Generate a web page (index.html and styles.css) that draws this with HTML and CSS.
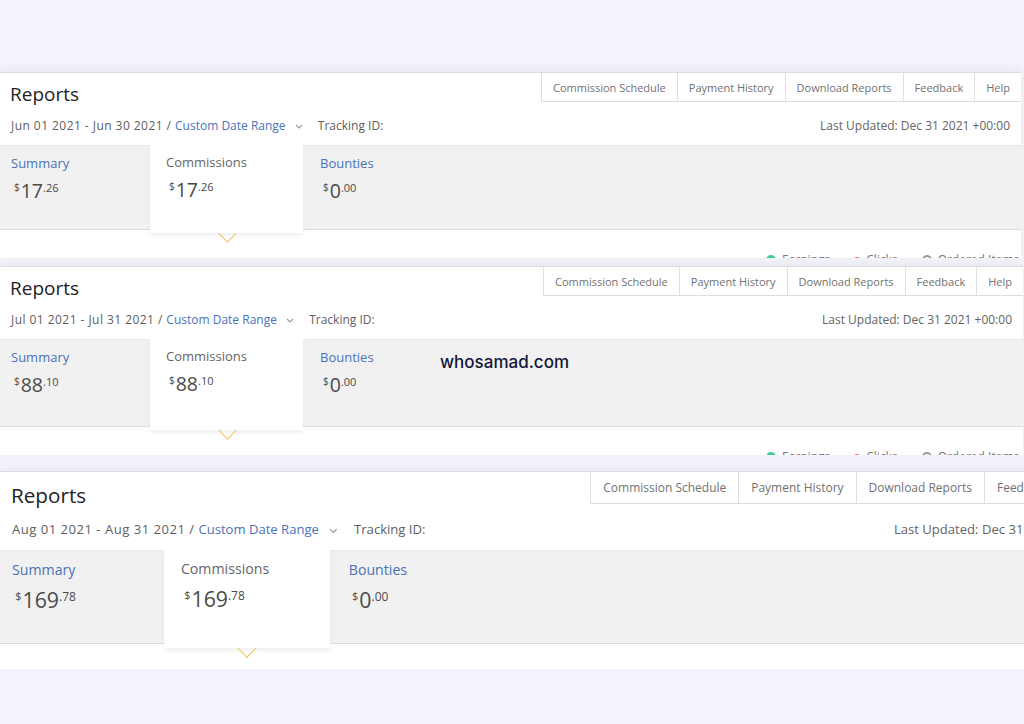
FILE: index.html
```html
<!DOCTYPE html>
<html lang="en">
<head>
    <meta charset="UTF-8">
    <title>Reports - Jun to Aug 2021</title>
    <link rel="stylesheet" href="styles.css">
</head>
<body>
    <main class="collage">

        <!-- June -->
        <section class="panel panel-jun">
            <header class="panel-head">
                <h2 class="title">Reports</h2>
                <nav class="tabs">
                    <a class="tab">Commission Schedule</a>
                    <a class="tab">Payment History</a>
                    <a class="tab">Download Reports</a>
                    <a class="tab">Feedback</a>
                    <a class="tab">Help</a>
                </nav>
            </header>
            <div class="range-row">
                <div class="range">
                    <span class="dates">Jun 01 2021 - Jun 30 2021 / </span><a class="link">Custom Date Range</a>
                    <svg class="caret" width="8" height="5" viewBox="0 0 8 5"><polyline points="1,1 4,4 7,1" fill="none" stroke="#9a9a9a" stroke-width="1.2"/></svg>
                    <span class="tracking">Tracking ID:</span>
                </div>
                <div class="updated">Last Updated: Dec 31 2021 +00:00</div>
            </div>
            <div class="band">
                <div class="tile tile-first">
                    <a class="tile-label">Summary</a>
                    <div class="amount"><span class="cur">$</span>17<span class="cents">.26</span></div>
                </div>
                <div class="tile tile-active">
                    <span class="tile-label">Commissions</span>
                    <div class="amount"><span class="cur">$</span>17<span class="cents">.26</span></div>
                </div>
                <div class="tile">
                    <a class="tile-label">Bounties</a>
                    <div class="amount"><span class="cur">$</span>0<span class="cents">.00</span></div>
                </div>
            </div>
            <div class="legend">
                <span class="key"><i class="dot dot-green"></i>Earnings</span>
                <span class="key"><i class="dot dot-pink"></i>Clicks</span>
                <span class="key"><i class="dot dot-grey"></i>Ordered Items</span>
            </div>
        </section>

        <!-- July -->
        <section class="panel panel-jul">
            <header class="panel-head">
                <h2 class="title">Reports</h2>
                <nav class="tabs">
                    <a class="tab">Commission Schedule</a>
                    <a class="tab">Payment History</a>
                    <a class="tab">Download Reports</a>
                    <a class="tab">Feedback</a>
                    <a class="tab">Help</a>
                </nav>
            </header>
            <div class="range-row">
                <div class="range">
                    <span class="dates">Jul 01 2021 - Jul 31 2021 / </span><a class="link">Custom Date Range</a>
                    <svg class="caret" width="8" height="5" viewBox="0 0 8 5"><polyline points="1,1 4,4 7,1" fill="none" stroke="#9a9a9a" stroke-width="1.2"/></svg>
                    <span class="tracking">Tracking ID:</span>
                </div>
                <div class="updated">Last Updated: Dec 31 2021 +00:00</div>
            </div>
            <div class="band">
                <div class="tile tile-first">
                    <a class="tile-label">Summary</a>
                    <div class="amount"><span class="cur">$</span>88<span class="cents">.10</span></div>
                </div>
                <div class="tile tile-active">
                    <span class="tile-label">Commissions</span>
                    <div class="amount"><span class="cur">$</span>88<span class="cents">.10</span></div>
                </div>
                <div class="tile">
                    <a class="tile-label">Bounties</a>
                    <div class="amount"><span class="cur">$</span>0<span class="cents">.00</span></div>
                </div>
            </div>
            <div class="legend">
                <span class="key"><i class="dot dot-green"></i>Earnings</span>
                <span class="key"><i class="dot dot-pink"></i>Clicks</span>
                <span class="key"><i class="dot dot-grey"></i>Ordered Items</span>
            </div>
            <div class="watermark">whosamad.com</div>
        </section>

        <!-- August (captured at a larger zoom) -->
        <section class="panel panel-aug">
            <header class="panel-head">
                <h2 class="title">Reports</h2>
                <nav class="tabs">
                    <a class="tab">Commission Schedule</a>
                    <a class="tab">Payment History</a>
                    <a class="tab">Download Reports</a>
                    <a class="tab">Feedback</a>
                    <a class="tab">Help</a>
                </nav>
            </header>
            <div class="range-row">
                <div class="range">
                    <span class="dates">Aug 01 2021 - Aug 31 2021 / </span><a class="link">Custom Date Range</a>
                    <svg class="caret" width="8" height="5" viewBox="0 0 8 5"><polyline points="1,1 4,4 7,1" fill="none" stroke="#9a9a9a" stroke-width="1.2"/></svg>
                    <span class="tracking">Tracking ID:</span>
                </div>
                <div class="updated">Last Updated: Dec 31 2021 +00:00</div>
            </div>
            <div class="band">
                <div class="tile tile-first">
                    <a class="tile-label">Summary</a>
                    <div class="amount"><span class="cur">$</span>169<span class="cents">.78</span></div>
                </div>
                <div class="tile tile-active">
                    <span class="tile-label">Commissions</span>
                    <div class="amount"><span class="cur">$</span>169<span class="cents">.78</span></div>
                </div>
                <div class="tile">
                    <a class="tile-label">Bounties</a>
                    <div class="amount"><span class="cur">$</span>0<span class="cents">.00</span></div>
                </div>
            </div>
        </section>

    </main>
</body>
</html>
```

FILE: styles.css
```css
body {
    margin: 0;
    padding: 0;
    height: 724px;
    overflow: hidden;
    background: #f3f4fb;
    font-family: "Open Sans", "Noto Sans", Arial, sans-serif;
    color: #555;
}
.collage {
    padding-top: 72px;
}

/* one screenshot of the reports page */
.panel {
    position: relative;
    width: 1021px;
    background: #fff;
    border-top: 1px solid #dcdcdc;
    box-shadow: 0 -4px 8px rgba(0,0,0,0.04);
    overflow: hidden;
    box-sizing: border-box;
}
.panel-jun {
    height: 186px;
    margin-bottom: 8px;
}
.panel-jul {
    width: 1023px;
    height: 189px;
    margin-bottom: 16px;
}
.panel-jul .band {
    height: 88px;
}
.panel-aug {
    height: 182px;
    zoom: 1.09;
}
.panel-aug .band {
    height: 86px;
}

.panel-head {
    display: flex;
    justify-content: space-between;
    align-items: flex-start;
}
.title {
    margin: 9px 0 0 10px;
    font-size: 19px;
    line-height: 24px;
    font-weight: 400;
    color: #232323;
}
.tabs {
    display: flex;
    height: 28px;
    border-bottom: 1px solid #dedede;
}
.tab {
    display: flex;
    align-items: center;
    padding: 0 11px;
    border-left: 1px solid #dedede;
    font-size: 11px;
    color: #727272;
    white-space: nowrap;
}

.range-row {
    display: flex;
    justify-content: space-between;
    height: 39px;
    padding: 12px 11px 0 11px;
    box-sizing: border-box;
    font-size: 12px;
    line-height: 16px;
    color: #5e5e5e;
    white-space: nowrap;
}
.dates {
    letter-spacing: 0.45px;
}
.link {
    color: #4a72b8;
}
.caret {
    margin: 0 12px 0 6px;
    vertical-align: middle;
}
.updated {
    color: #646464;
}

/* summary / commissions / bounties strip */
.band {
    display: flex;
    height: 85px;
    background: #f1f1f1;
    border-top: 1px solid #e8e8e8;
    border-bottom: 1px solid #dcdcdc;
    box-sizing: border-box;
}
.tile {
    width: 153px;
    padding: 8px 0 0 17px;
    box-sizing: border-box;
}
.tile-first {
    width: 150px;
    padding-left: 11px;
}
.tile-active {
    position: relative;
    padding-left: 16px;
    margin: -1px 0 -4px;
    background: #fff;
    box-shadow: 0 3px 4px rgba(0,0,0,0.06);
}
.tile-active::after {
    content: "";
    position: absolute;
    left: 50%;
    top: calc(100% - 6px);
    width: 12px;
    height: 12px;
    margin-left: -6px;
    border-right: 1.5px solid #f2c262;
    border-bottom: 1.5px solid #f2c262;
    transform: rotate(45deg);
}
.tile-label {
    display: block;
    font-size: 13px;
    line-height: 18px;
    color: #4a72b8;
}
.tile-active .tile-label {
    color: #666;
}
.amount {
    margin-top: 3px;
    padding-left: 3px;
    font-size: 19.5px;
    line-height: 24px;
    color: #4a4a4a;
}
.cur {
    font-size: 10px;
    vertical-align: 7px;
    margin-right: 1px;
}
.cents {
    font-size: 11px;
    vertical-align: 6px;
}

/* chart legend, cut off by the screenshot */
.legend {
    display: flex;
    gap: 24px;
    padding: 22px 0 0 766px;
    font-size: 12px;
    line-height: 16px;
    color: #777;
    white-space: nowrap;
}
.key {
    display: flex;
    flex-shrink: 0;
    align-items: center;
    gap: 6px;
}
.dot {
    width: 10px;
    height: 10px;
    border-radius: 50%;
}
.dot-green {
    background: #3fcf9c;
}
.dot-pink {
    width: 6px;
    height: 6px;
    background: #f06a8a;
}
.dot-grey {
    background: #fff;
    border: 2px solid #999;
    box-sizing: border-box;
}

.watermark {
    position: absolute;
    left: 440px;
    top: 85px;
    font-family: Inter, "Liberation Sans", sans-serif;
    font-size: 17px;
    font-weight: 500;
    color: #12173a;
}
```
